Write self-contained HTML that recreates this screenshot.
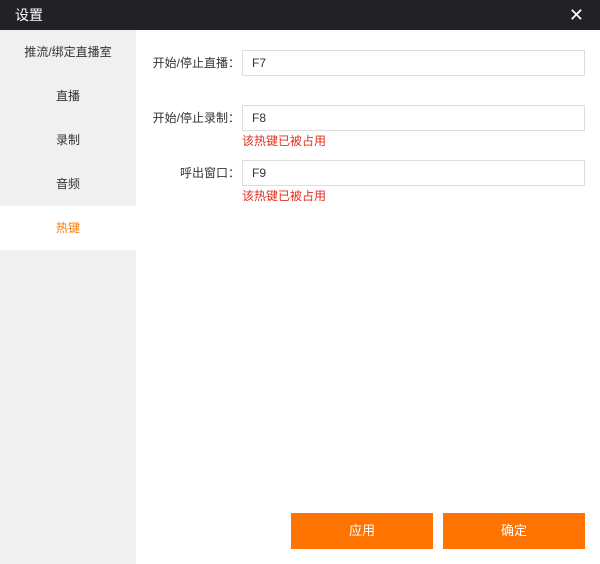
<!DOCTYPE html><html><head><meta charset="utf-8"><style>
*{margin:0;padding:0;box-sizing:border-box}
body{width:600px;height:564px;background:#fff;font-family:"Liberation Sans","Noto Sans CJK SC",sans-serif;font-size:12px;color:#333;position:relative;overflow:hidden}
.t{position:absolute;left:0;top:0;width:600px;height:30px;background:#222226;color:#fff;font-size:14px;line-height:30px;padding-left:15px}
.x{position:absolute;right:16px;top:0;font-size:18px;line-height:30px}
.sb{position:absolute;left:0;top:30px;width:136px;height:534px;background:#f0f0f0}
.it{height:44px;line-height:44px;text-align:center;font-size:12px;color:#333}
.it.a{background:#fff;color:#ff7a00}
.l{position:absolute;width:240px;left:0;text-align:right;font-size:12px;line-height:26px}
.in{position:absolute;left:242px;width:343px;height:26px;border:1px solid #ddd;line-height:24px;padding-left:9px;font-size:12px}
.e{position:absolute;left:242px;color:#e0301e;font-size:12px}
.b{position:absolute;top:513px;width:142px;height:36px;background:#ff7300;color:#fff;text-align:center;line-height:36px;font-size:13px}
</style></head><body>
<div class="t">设置<span class="x">✕</span></div>
<div class="sb"><div class="it">推流/绑定直播室</div><div class="it">直播</div><div class="it">录制</div><div class="it">音频</div><div class="it a">热键</div></div>
<div class="l" style="top:50px">开始/停止直播：</div><div class="in" style="top:50px">F7</div>
<div class="l" style="top:105px">开始/停止录制：</div><div class="in" style="top:105px">F8</div>
<div class="e" style="top:132px">该热键已被占用</div>
<div class="l" style="top:160px">呼出窗口：</div><div class="in" style="top:160px">F9</div>
<div class="e" style="top:187px">该热键已被占用</div>
<div class="b" style="left:291px">应用</div><div class="b" style="left:443px">确定</div>
</body></html>
